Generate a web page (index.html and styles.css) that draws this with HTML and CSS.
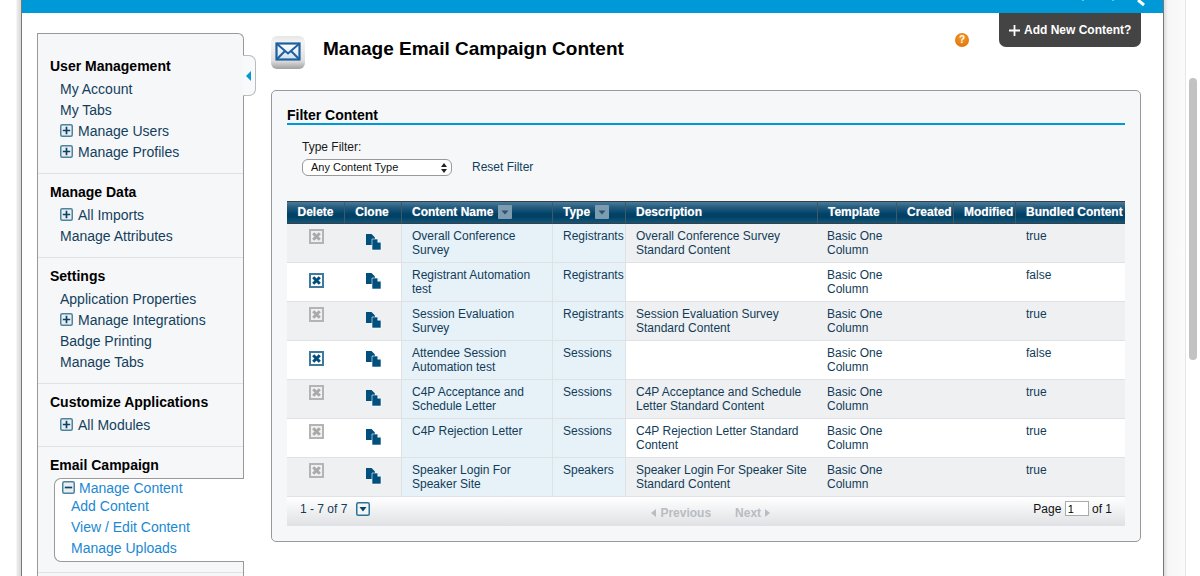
FILE: index.html
```html
<!DOCTYPE html>
<html lang="en">
<head>
<meta charset="utf-8">
<title>Manage Email Campaign Content</title>
<link rel="stylesheet" href="styles.css">
</head>
<body>
<svg class="defs" width="0" height="0" aria-hidden="true">
  <symbol id="i-plus" viewBox="0 0 13 13"><rect x=".75" y=".75" width="11.500" height="11.500" rx="1.500" fill="#e8eef2" stroke="#4d839f" stroke-width="1.500"/><path d="M6.500 2.800v7.400M2.800 6.500h7.400" stroke="#0f4263" stroke-width="1.700"/></symbol>
  <symbol id="i-minus" viewBox="0 0 13 13"><rect x=".75" y=".75" width="11.500" height="11.500" rx="1.500" fill="#e8eef2" stroke="#4d839f" stroke-width="1.500"/><path d="M2.800 6.500h7.400" stroke="#0f4263" stroke-width="1.700"/></symbol>
  <symbol id="i-clone" viewBox="0 0 16 17"><path d="M0 0h5.500l3.500 3.500V11H0z" fill="#004f7c"/><path d="M6 5h5.500L15 8.500V16H6z" fill="#004f7c" stroke="#fff" stroke-width=".6"/><path d="M11.500 5v3.500H15" fill="#fff"/></symbol>
  <symbol id="i-del" viewBox="0 0 15 15"><rect class="del-edge" x="1" y="1" width="13" height="13" stroke-width="2"/><path class="del-x" d="M4.200 4.200l6.600 6.600M10.800 4.200l-6.600 6.600" stroke-width="3"/></symbol>
  <symbol id="i-sort" viewBox="0 0 14 14"><rect width="14" height="14" rx="1" fill="#7d9cb0"/><path d="M3.500 5.500h7L7 9.500z" fill="#27546f"/></symbol>
</svg>

<div class="gutter gutter-left"></div>
<div class="shell">
  <div class="topbar">
    <svg class="topbar-marks" width="70" height="8" viewBox="0 0 70 8"><path d="M4 0h2M34 0h2" stroke="#cfeaf7" stroke-width="1"/><path d="M60 0l6 5" stroke="#fff" stroke-width="3"/></svg>
  </div>
  <div class="columns">
    <nav class="sidebar">
      <div class="side-tab"><span class="side-tab-arrow"></span></div>
      <section class="side-section">
        <h3>User Management</h3>
        <a class="side-link">My Account</a>
        <a class="side-link">My Tabs</a>
        <a class="side-link"><svg class="box-icon"><use href="#i-plus"/></svg>Manage Users</a>
        <a class="side-link"><svg class="box-icon"><use href="#i-plus"/></svg>Manage Profiles</a>
      </section>
      <section class="side-section">
        <h3>Manage Data</h3>
        <a class="side-link"><svg class="box-icon"><use href="#i-plus"/></svg>All Imports</a>
        <a class="side-link">Manage Attributes</a>
      </section>
      <section class="side-section">
        <h3>Settings</h3>
        <a class="side-link">Application Properties</a>
        <a class="side-link"><svg class="box-icon"><use href="#i-plus"/></svg>Manage Integrations</a>
        <a class="side-link">Badge Printing</a>
        <a class="side-link">Manage Tabs</a>
      </section>
      <section class="side-section">
        <h3>Customize Applications</h3>
        <a class="side-link"><svg class="box-icon"><use href="#i-plus"/></svg>All Modules</a>
      </section>
      <section class="side-section">
        <h3>Email Campaign</h3>
        <div class="flyout">
          <a class="fly-head"><svg class="box-icon"><use href="#i-minus"/></svg>Manage Content</a>
          <a class="fly-link">Add Content</a>
          <a class="fly-link">View / Edit Content</a>
          <a class="fly-link">Manage Uploads</a>
        </div>
      </section>
    </nav>

    <main class="main">
      <header class="page-head">
        <svg class="mail-icon" width="34" height="34" viewBox="0 0 34 34">
          <defs>
            <linearGradient id="tile" x1="0" y1="0" x2="0" y2="1"><stop offset="0" stop-color="#e6e6e6"/><stop offset=".2" stop-color="#f4f4f4"/><stop offset=".75" stop-color="#dedede"/><stop offset="1" stop-color="#a0a0a0"/></linearGradient>
            <linearGradient id="env" x1="0" y1="0" x2="0" y2="1"><stop offset="0" stop-color="#ffffff"/><stop offset="1" stop-color="#cfe0f0"/></linearGradient>
          </defs>
          <rect width="34" height="33" rx="6" fill="url(#tile)"/>
          <rect x="5.500" y="7.500" width="23" height="16" fill="url(#env)" stroke="#1f5f9f" stroke-width="2.200"/>
          <path d="M5.500 7.500L17 17.500 28.500 7.500M5.500 23.500l8.500-8.500M28.500 23.500l-8.500-8.500" fill="none" stroke="#1f5f9f" stroke-width="2"/>
        </svg>
        <h1>Manage Email Campaign Content</h1>
        <span class="help">?</span>
        <a class="add-btn"><svg width="11" height="11" viewBox="0 0 11 11"><path d="M5.500 0v11M0 5.500h11" stroke="#fff" stroke-width="1.800"/></svg>Add New Content?</a>
      </header>

      <section class="panel">
        <h2>Filter Content</h2>
        <div class="filter">
          <label class="filter-label" for="type">Type Filter:</label>
          <div class="filter-row">
            <div class="select-wrap">
              <select id="type"><option>Any Content Type</option></select>
              <svg class="select-arrows" width="6" height="10" viewBox="0 0 6 10"><path d="M3 0l3 4H0zM3 10L0 6h6z" fill="#222"/></svg>
            </div>
            <a class="reset">Reset Filter</a>
          </div>
        </div>

        <table class="grid">
          <colgroup>
            <col class="c-del"><col class="c-clone"><col class="c-name"><col class="c-type"><col class="c-desc"><col class="c-tpl"><col class="c-created"><col class="c-mod"><col class="c-bundled">
          </colgroup>
          <thead>
            <tr>
              <th class="center">Delete</th>
              <th class="center">Clone</th>
              <th>Content Name<svg class="sort"><use href="#i-sort"/></svg></th>
              <th>Type<svg class="sort"><use href="#i-sort"/></svg></th>
              <th>Description</th>
              <th>Template</th>
              <th>Created</th>
              <th>Modified</th>
              <th>Bundled Content</th>
            </tr>
          </thead>
          <tbody>
            <tr>
              <td class="icon"><svg class="del off"><use href="#i-del"/></svg></td>
              <td class="icon"><svg class="clone"><use href="#i-clone"/></svg></td>
              <td class="tint">Overall Conference Survey</td><td class="tint">Registrants</td>
              <td class="desc">Overall Conference Survey Standard Content</td><td>Basic One Column</td><td></td><td></td><td class="last">true</td>
            </tr>
            <tr>
              <td class="icon"><svg class="del on"><use href="#i-del"/></svg></td>
              <td class="icon"><svg class="clone"><use href="#i-clone"/></svg></td>
              <td class="tint">Registrant Automation test</td><td class="tint">Registrants</td>
              <td class="desc"></td><td>Basic One Column</td><td></td><td></td><td class="last">false</td>
            </tr>
            <tr>
              <td class="icon"><svg class="del off"><use href="#i-del"/></svg></td>
              <td class="icon"><svg class="clone"><use href="#i-clone"/></svg></td>
              <td class="tint">Session Evaluation Survey</td><td class="tint">Registrants</td>
              <td class="desc">Session Evaluation Survey Standard Content</td><td>Basic One Column</td><td></td><td></td><td class="last">true</td>
            </tr>
            <tr>
              <td class="icon"><svg class="del on"><use href="#i-del"/></svg></td>
              <td class="icon"><svg class="clone"><use href="#i-clone"/></svg></td>
              <td class="tint">Attendee Session Automation test</td><td class="tint">Sessions</td>
              <td class="desc"></td><td>Basic One Column</td><td></td><td></td><td class="last">false</td>
            </tr>
            <tr>
              <td class="icon"><svg class="del off"><use href="#i-del"/></svg></td>
              <td class="icon"><svg class="clone"><use href="#i-clone"/></svg></td>
              <td class="tint">C4P Acceptance and Schedule Letter</td><td class="tint">Sessions</td>
              <td class="desc">C4P Acceptance and Schedule Letter Standard Content</td><td>Basic One Column</td><td></td><td></td><td class="last">true</td>
            </tr>
            <tr>
              <td class="icon"><svg class="del off"><use href="#i-del"/></svg></td>
              <td class="icon"><svg class="clone"><use href="#i-clone"/></svg></td>
              <td class="tint">C4P Rejection Letter</td><td class="tint">Sessions</td>
              <td class="desc">C4P Rejection Letter Standard Content</td><td>Basic One Column</td><td></td><td></td><td class="last">true</td>
            </tr>
            <tr>
              <td class="icon"><svg class="del off"><use href="#i-del"/></svg></td>
              <td class="icon"><svg class="clone"><use href="#i-clone"/></svg></td>
              <td class="tint">Speaker Login For Speaker Site</td><td class="tint">Speakers</td>
              <td class="desc">Speaker Login For Speaker Site Standard Content</td><td>Basic One Column</td><td></td><td></td><td class="last">true</td>
            </tr>
          </tbody>
        </table>

        <footer class="pager">
          <span class="count">1 - 7 of 7</span>
          <svg class="pager-menu" width="14" height="14" viewBox="0 0 14 14"><rect x=".75" y=".75" width="12.500" height="12.500" rx="1.500" fill="#f2f5f7" stroke="#2f7196" stroke-width="1.500"/><path d="M3.500 5h7L7 9.500z" fill="#0f4263"/></svg>
          <div class="pager-nav">
            <span class="nav-item"><span class="tri tri-left"></span>Previous</span>
            <span class="nav-item">Next<span class="tri tri-right"></span></span>
          </div>
          <div class="pager-page">Page <input class="page-input" value="1" aria-label="Page"> of 1</div>
        </footer>
      </section>
    </main>
  </div>
</div>
<div class="gutter gutter-right"></div>
<div class="scrolltrack"><div class="scrollthumb"></div></div>
</body>
</html>
```

FILE: styles.css
```css
* { box-sizing: border-box; }

html, body {
  margin: 0;
  height: 100%;
  overflow: hidden;
}

body {
  display: flex;
  background: #fff;
  font-family: "Liberation Sans", Arial, sans-serif;
  font-size: 12px;
  color: #123c58;
}

.defs { position: absolute; }

.gutter { flex: none; }

.gutter-left {
  width: 21px;
  background: linear-gradient(90deg, #fff 0, #fff 16px, #ececec 17px, #d9d9d9 21px);
}

.gutter-right {
  width: 22px;
  background: linear-gradient(90deg, #dcdcdc 0, #f6f6f6 4px, #fbfbfb 100%);
  border-right: 1px solid #e6e6e6;
}

.shell {
  flex: none;
  width: 1143px;
  height: 576px;
  overflow: hidden;
  background: #fff;
  border-left: 1px solid #777;
  border-right: 1px solid #777;
}

.topbar {
  height: 13px;
  background: #0099d8;
  display: flex;
  justify-content: flex-end;
  padding-right: 15px;
}

.topbar-marks { display: block; }

.scrolltrack {
  flex: none;
  width: 14px;
  padding: 78px 3px 0 3px;
  background: #fff;
}

.scrollthumb {
  width: 8px;
  height: 282px;
  border-radius: 4px;
  background: #c2c2c2;
}

.columns { display: flex; }

/* sidebar */
.sidebar {
  position: relative;
  flex: none;
  width: 207px;
  margin: 20px 0 0 15px;
  background: #f6f7f9;
  border: 1px solid #999;
  border-bottom: 0;
  border-radius: 0 6px 0 0;
  min-height: 560px;
}

.side-tab {
  position: absolute;
  left: 100%;
  top: 21px;
  width: 13px;
  height: 41px;
  background: #f8f9fa;
  border: 1px solid #bbb;
  border-left: 0;
  border-radius: 0 7px 7px 0;
  display: flex;
  align-items: center;
  justify-content: center;
}

.side-tab-arrow {
  width: 0;
  height: 0;
  border-top: 5.5px solid transparent;
  border-bottom: 5.5px solid transparent;
  border-right: 5px solid #0099d8;
  margin-right: 2px;
}

.side-section {
  padding: 10px 0 10px 12px;
  border-bottom: 1px solid #dfe1e4;
}

.side-section:first-of-type { padding-top: 24px; }

.side-section h3 {
  margin: 0 0 5px;
  font-size: 14px;
  line-height: 16px;
  font-weight: bold;
  color: #000;
}

.side-link {
  display: flex;
  align-items: center;
  height: 21px;
  padding-bottom: 2px;
  margin-left: 10px;
  font-size: 14px;
  color: #133f5c;
}

.box-icon {
  flex: none;
  width: 13px;
  height: 13px;
  margin-right: 5px;
}

.flyout {
  margin: 0 -1px 0 4px;
  padding: 0 0 2px;
  background: #fff;
  border: 1px solid #999;
  border-right: 0;
  border-radius: 7px 0 0 7px;
}

.fly-head, .fly-link {
  display: flex;
  align-items: center;
  font-size: 14px;
  color: #1b88d2;
}

.fly-head { height: 17px; padding-left: 7px; }
.fly-head .box-icon { margin-right: 4px; }
.fly-link { height: 21px; padding: 0 0 2px 16px; }

/* main */
.main {
  flex: none;
  width: 870px;
  margin-left: 27px;
}

.page-head {
  display: flex;
  align-items: flex-start;
  height: 77px;
}

.mail-icon {
  flex: none;
  margin-top: 23px;
  margin-right: 18px;
}

.page-head h1 {
  margin: 25px 0 0;
  font-size: 19px;
  line-height: 22px;
  font-weight: bold;
  color: #000;
  flex: 1;
}

.help {
  flex: none;
  width: 14px;
  height: 14px;
  margin-top: 20px;
  border-radius: 50%;
  background: radial-gradient(circle at 50% 35%, #f59a2a, #d96d05);
  color: #fff;
  font-size: 10px;
  font-weight: bold;
  line-height: 14px;
  text-align: center;
}

.add-btn {
  flex: none;
  display: flex;
  align-items: center;
  gap: 4px;
  width: 142px;
  height: 34px;
  margin-left: 30px;
  padding-left: 10px;
  background: #444;
  border-radius: 0 0 7px 7px;
  color: #fff;
  font-size: 12px;
  font-weight: bold;
}

.panel {
  height: 452px;
  padding: 16px 15px 15px;
  background: #f6f7f9;
  border: 1px solid #999;
  border-radius: 5px;
}

.panel h2 {
  margin: 0;
  height: 18px;
  font-size: 14px;
  line-height: 16px;
  font-weight: bold;
  color: #000;
  border-bottom: 2px solid #0099d8;
}

.filter {
  padding: 15px 0 0 15px;
}

.filter-label {
  display: block;
  line-height: 14px;
  color: #1a1a1a;
}

.filter-row {
  display: flex;
  align-items: flex-start;
  gap: 20px;
  margin-top: 5px;
}

.select-wrap {
  position: relative;
  width: 150px;
  height: 17px;
}

.select-wrap select {
  appearance: none;
  display: block;
  width: 100%;
  height: 100%;
  padding: 0 0 2px 8px;
  background: #fff;
  border: 1px solid #999;
  border-radius: 6px;
  font: 11px "Liberation Sans", Arial, sans-serif;
  color: #111;
}

.select-arrows {
  position: absolute;
  right: 5px;
  top: 4px;
}

.reset {
  line-height: 14px;
  margin-top: 1px;
  color: #133f5c;
}

/* table */
.grid {
  width: 838px;
  margin-top: 25px;
  table-layout: fixed;
  border-collapse: separate;
  border-spacing: 0;
}

.c-del { width: 57px; }
.c-clone { width: 57px; }
.c-name { width: 151px; }
.c-type { width: 73px; }
.c-desc { width: 192px; }
.c-tpl { width: 79px; }
.c-created { width: 57px; }
.c-mod { width: 62px; }
.c-bundled { width: 110px; }

.grid th {
  height: 23px;
  padding: 0 0 2px 10px;
  background: linear-gradient(#4a7b99 0, #245c7e 25%, #02436a 55%, #004063 70%, #14567a 100%);
  border-top: 1px solid #3a3f44;
  border-bottom: 1px solid #3a3f44;
  border-left: 1px solid #3d5a6d;
  color: #fff;
  font-size: 12px;
  font-weight: bold;
  text-align: left;
  white-space: nowrap;
  text-shadow: 0 0 1px rgba(255, 255, 255, .5);
}

.grid th:first-child { border-left: 0; }
.grid th.center { padding: 0 0 2px; text-align: center; }
.grid th.center:nth-child(2) { padding-right: 2px; }

.sort {
  width: 14px;
  height: 14px;
  margin-left: 5px;
  vertical-align: -3px;
}

.grid td {
  height: 39px;
  padding: 5px 4px 0 10px;
  vertical-align: top;
  line-height: 14px;
  font-size: 12px;
  color: #123c58;
  border-bottom: 1px solid #dfe1e4;
}

.grid tbody tr:nth-child(odd) td { background: #eff0f2; }
.grid tbody tr:nth-child(even) td { background: #fff; }

.grid tbody tr td.tint {
  background: #e6f1f8;
  border-left: 1px solid #dfe1e4;
}

.grid td.desc { border-left: 1px solid #dfe1e4; }
.grid td.last { padding-left: 11px; }

.grid td.icon {
  padding: 0;
  text-align: center;
}

.del {
  display: block;
  width: 15px;
  height: 15px;
  margin: 5px auto 0;
  position: relative;
  left: 1px;
}

.del-edge { fill: var(--del-fill); stroke: var(--del-edge); }
.del-x { stroke: var(--del-x); }

.del.off { --del-fill: #f0f0f0; --del-edge: #b4b4b4; --del-x: #a9a9a9; }
.del.on { --del-fill: #fff; --del-edge: #3f7a9c; --del-x: #004f7c; margin-top: 10px; }

.clone {
  display: block;
  width: 16px;
  height: 17px;
  margin: 10px auto 0;
  position: relative;
  left: 1px;
}

.pager {
  display: flex;
  align-items: flex-start;
  width: 838px;
  height: 29px;
  padding: 5px 13px 0;
  background: linear-gradient(#fff, #dfe1e4);
  line-height: 14px;
  color: #123c58;
}

.pager-menu {
  flex: none;
  margin-left: 9px;
}

.pager-nav {
  display: flex;
  gap: 24px;
  margin: 4px 0 0 281px;
  font-weight: bold;
  color: #b9bcc0;
}

.nav-item {
  display: flex;
  align-items: center;
  gap: 4px;
}

.tri {
  width: 0;
  height: 0;
  border-top: 4px solid transparent;
  border-bottom: 4px solid transparent;
}

.tri-left { border-right: 5px solid #b9bcc0; }
.tri-right { border-left: 5px solid #b9bcc0; }

.pager-page {
  margin: -1px 0 0 auto;
  color: #111;
}

.page-input {
  width: 24px;
  height: 15px;
  padding: 0 2px;
  margin: 0;
  border: 1px solid #aaa;
  background: #fff;
  font: 11px "Liberation Sans", Arial, sans-serif;
  vertical-align: 0;
}
```
